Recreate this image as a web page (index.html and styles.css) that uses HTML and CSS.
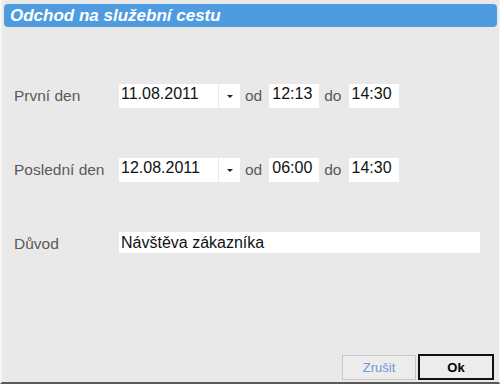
FILE: index.html
```html
<!DOCTYPE html>
<html>
<head>
  <title>Odchod na služební cestu</title>
  <link rel="stylesheet" href="styles.css">
</head>
<body>
<div class="window">
  <div class="title">Odchod na služební cestu</div>

  <div class="form">
    <div class="row">
      <span class="label">První den</span>
      <span class="field date">11.08.2011</span>
      <span class="field drop"><span class="arrow"></span></span>
      <span class="word">od</span>
      <span class="field time">12:13</span>
      <span class="word">do</span>
      <span class="field time">14:30</span>
    </div>
    <div class="row">
      <span class="label">Poslední den</span>
      <span class="field date">12.08.2011</span>
      <span class="field drop"><span class="arrow"></span></span>
      <span class="word">od</span>
      <span class="field time">06:00</span>
      <span class="word">do</span>
      <span class="field time">14:30</span>
    </div>
    <div class="row">
      <span class="label">Důvod</span>
      <span class="field reason">Návštěva zákazníka</span>
    </div>
  </div>

  <div class="actions">
    <button class="btn cancel">Zrušit</button>
    <button class="btn ok">Ok</button>
  </div>
</div>
</body>
</html>
```

FILE: styles.css
```css
body{
margin: 0;
background-color: #e9e9e9;
font-family: "Liberation Sans", Arial, sans-serif;
}
.window{
width: 500px;
height: 384px;
box-sizing: border-box;
padding: 4px 5px 2px 4px;
border-left: 2px solid #f6f6f6;
border-right: 1px solid #f6f6f6;
border-bottom: 2px solid #5a5a5a;
display: flex;
flex-direction: column;
}
.title{
margin-left: -2px;
margin-right: -3px;
height: 23px;
line-height: 23px;
padding-left: 6px;
border-radius: 4px;
background-color: #4e9be0;
color: white;
font-size: 17px;
font-weight: bold;
font-style: italic;
}
.form{
margin-top: 57px;
padding-left: 8px;
display: flex;
flex-direction: column;
gap: 50px;
}
.row{
display: flex;
align-items: center;
height: 24px;
}
.label{
width: 105px;
color: #5a5a5a;
font-size: 15.5px;
}
.field{
box-sizing: border-box;
height: 24px;
line-height: 20px;
padding-left: 2px;
background-color: white;
color: #111;
font-size: 16px;
}
.date{
width: 99px;
}
.drop{
width: 21px;
margin-left: 1px;
display: flex;
align-items: center;
justify-content: center;
padding: 0;
}
.arrow{
width: 0;
height: 0;
border-left: 3px solid transparent;
border-right: 3px solid transparent;
border-top: 3px solid #222;
}
.word{
margin: 0 7px 0 5px;
color: #5a5a5a;
font-size: 15.5px;
}
.time{
width: 50px;
padding-left: 3px;
}
.reason{
width: 361px;
height: 21px;
line-height: 21px;
align-self: flex-start;
}
.actions{
margin-top: auto;
display: flex;
justify-content: flex-end;
gap: 2px;
}
.btn{
height: 26px;
font-family: "Liberation Sans", Arial, sans-serif;
font-size: 13px;
}
.cancel{
width: 74px;
margin-top: 1px;
height: 25px;
border: 1px solid #c8c8c8;
background-color: #ececec;
color: #6c9bd6;
}
.ok{
width: 76px;
border: 2px solid #111;
background-color: #ececec;
color: black;
font-weight: bold;
}
```
